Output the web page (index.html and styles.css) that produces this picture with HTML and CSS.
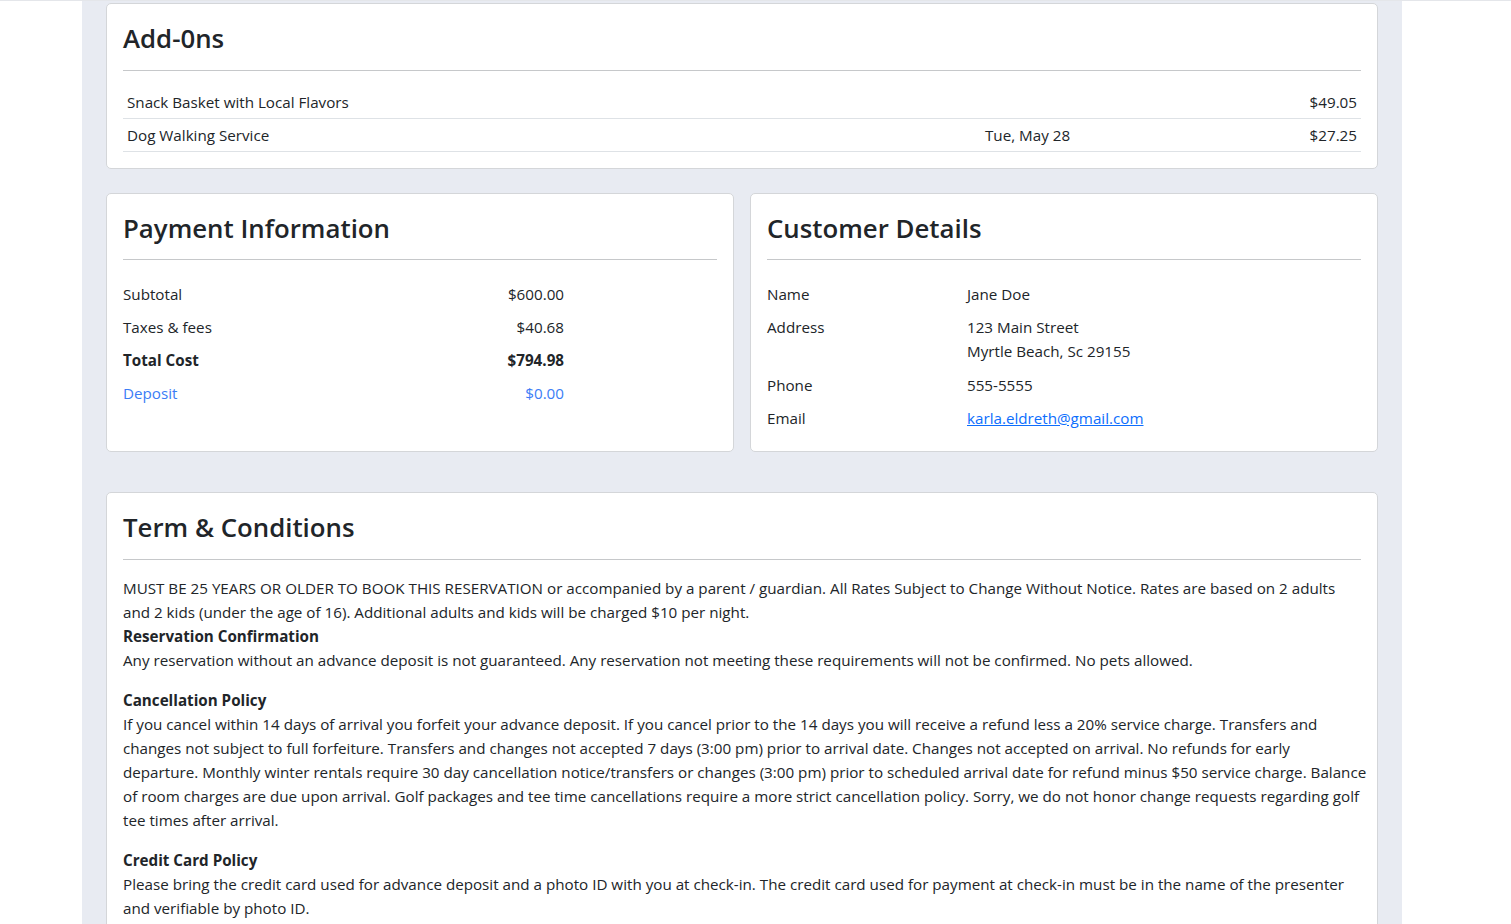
FILE: index.html
```html
<!DOCTYPE html>
<html lang="en">
<head>
<meta charset="utf-8">
<title>Reservation</title>
<link rel="stylesheet" href="styles.css">
</head>
<body>
<div class="panel">
  <section class="card">
    <h3 class="card-title">Add-0ns</h3>
    <hr class="divider">
    <div class="addons">
      <div class="addon-row">
        <span class="addon-name">Snack Basket with Local Flavors</span>
        <span class="addon-date"></span>
        <span class="addon-price">$49.05</span>
      </div>
      <div class="addon-row">
        <span class="addon-name">Dog Walking Service</span>
        <span class="addon-date">Tue, May 28</span>
        <span class="addon-price">$27.25</span>
      </div>
    </div>
  </section>

  <div class="two-col">
    <section class="card">
      <h3 class="card-title">Payment Information</h3>
      <hr class="divider">
      <div class="pay-table">
        <div class="pay-row"><span>Subtotal</span><span class="num">$600.00</span></div>
        <div class="pay-row"><span>Taxes &amp; fees</span><span class="num">$40.68</span></div>
        <div class="pay-row strong"><span>Total Cost</span><span class="num">$794.98</span></div>
        <div class="pay-row blue"><span>Deposit</span><span class="num">$0.00</span></div>
      </div>
    </section>
    <section class="card">
      <h3 class="card-title">Customer Details</h3>
      <hr class="divider">
      <div class="cust-table">
        <div class="cust-row"><span class="cust-label">Name</span><span>Jane Doe</span></div>
        <div class="cust-row"><span class="cust-label">Address</span><span>123 Main Street<br>Myrtle Beach, Sc 29155</span></div>
        <div class="cust-row"><span class="cust-label">Phone</span><span>555-5555</span></div>
        <div class="cust-row"><span class="cust-label">Email</span><span><a class="email" href="#">karla.eldreth@gmail.com</a></span></div>
      </div>
    </section>
  </div>

  <section class="card terms">
    <h3 class="card-title">Term &amp; Conditions</h3>
    <hr class="divider">
    <p>MUST BE 25 YEARS OR OLDER TO BOOK THIS RESERVATION or accompanied by a parent / guardian. All Rates Subject to Change Without Notice. Rates are based on 2 adults<br>
    and 2 kids (under the age of 16). Additional adults and kids will be charged $10 per night.<br>
    <b>Reservation Confirmation</b><br>
    Any reservation without an advance deposit is not guaranteed. Any reservation not meeting these requirements will not be confirmed. No pets allowed.</p>
    <p><b>Cancellation Policy</b><br>
    If you cancel within 14 days of arrival you forfeit your advance deposit. If you cancel prior to the 14 days you will receive a refund less a 20% service charge. Transfers and<br>
    changes not subject to full forfeiture. Transfers and changes not accepted 7 days (3:00 pm) prior to arrival date. Changes not accepted on arrival. No refunds for early<br>
    departure. Monthly winter rentals require 30 day cancellation notice/transfers or changes (3:00 pm) prior to scheduled arrival date for refund minus $50 service charge. Balance<br>
    of room charges are due upon arrival. Golf packages and tee time cancellations require a more strict cancellation policy. Sorry, we do not honor change requests regarding golf<br>
    tee times after arrival.</p>
    <p><b>Credit Card Policy</b><br>
    Please bring the credit card used for advance deposit and a photo ID with you at check-in. The credit card used for payment at check-in must be in the name of the presenter<br>
    and verifiable by photo ID.</p>
  </section>
</div>
</body>
</html>
```

FILE: styles.css
```css
html, body {
  margin: 0;
  padding: 0;
}
body {
  background: #ffffff;
  border-top: 1px solid #e4e6ea;
  font-family: "Open Sans", "Noto Sans", sans-serif;
  font-size: 15.2px;
  line-height: 24px;
  color: #212529;
  overflow: hidden;
  height: 923px;
}
.panel {
  width: 1320px;
  margin-left: 82px;
  box-sizing: border-box;
  padding: 2px 24px 40px;
  background: #e8ebf2;
  min-height: 923px;
}
.card {
  background: #fff;
  border: 1px solid #d4d6d9;
  border-radius: 5px;
  padding: 16px;
}
.card-title {
  margin: 0;
  font-size: 25.8px;
  line-height: 37.6px;
  font-weight: 600;
  color: #212529;
}
.divider {
  border: 0;
  border-top: 1px solid #c6c8ca;
  margin: 12px 0 17px;
}
.addons {
  margin-top: -2px;
}
.addon-row {
  display: grid;
  grid-template-columns: 1fr 290px 90px;
  border-bottom: 1px solid #dee2e6;
}
.addon-row > span {
  padding: 4px;
}
.addon-price {
  text-align: right;
}
.two-col {
  display: grid;
  grid-template-columns: 1fr 1fr;
  gap: 16px;
  margin-top: 24px;
}
.pay-table {
  width: 441px;
}
.pay-row {
  display: flex;
  justify-content: space-between;
  padding: 4.5px 0;
}
.pay-row.strong {
  font-weight: 700;
}
.pay-row.blue {
  color: #3b7df6;
}
.cust-table {
  padding-bottom: 1px;
}
.cust-row {
  display: flex;
  padding: 4.5px 0;
}
.cust-row:nth-child(2) {
  padding-bottom: 5.5px;
}
.cust-label {
  width: 200px;
  flex: none;
}
.email {
  color: #0d6efd;
  text-decoration: underline;
}
.terms {
  margin-top: 40px;
}
.terms .divider {
  margin-bottom: 16px;
}
.terms p {
  margin: 0 -10px 16px 0;
}
.terms b {
  font-weight: 700;
}
```
